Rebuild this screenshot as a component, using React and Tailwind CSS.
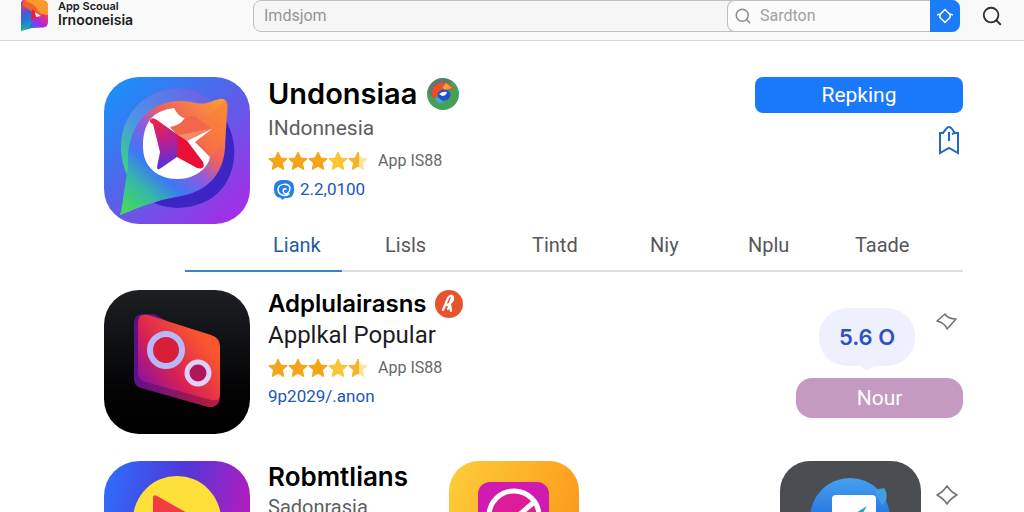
import React, { useState } from 'react';
import { Search } from 'lucide-react';

const TABS = ['Liank', 'Lisls', 'Tintd', 'Niy', 'Nplu', 'Taade'];

const BrandLogo = () => (
  <svg className="w-7 h-8 shrink-0" viewBox="0 0 28 32" fill="none">
    <defs>
      <linearGradient id="brandBase" x1="3" y1="28" x2="27" y2="4" gradientUnits="userSpaceOnUse">
        <stop offset="0" stopColor="#10b981" />
        <stop offset="0.2" stopColor="#2f6fe8" />
        <stop offset="0.45" stopColor="#b026e3" />
        <stop offset="0.7" stopColor="#e8307a" />
        <stop offset="1" stopColor="#fb923c" />
      </linearGradient>
      <linearGradient id="brandWing" x1="2" y1="4" x2="10" y2="29" gradientUnits="userSpaceOnUse">
        <stop offset="0" stopColor="#e0455a" />
        <stop offset="0.35" stopColor="#4a55e0" />
        <stop offset="0.7" stopColor="#1f7fd0" />
        <stop offset="1" stopColor="#1fc08a" />
      </linearGradient>
    </defs>
    <path d="M4 0h18q6 0 6 6v16q0 5-5 5.500L12 28l-11 3V4q0-4 3-4z" fill="url(#brandBase)" />
    <path d="M5 0h17q6 0 6 6v9l-7-1L9 4z" fill="#fb9a2c" />
    <path d="M4 0l10 5 8 10-7-1L2 5z" fill="#f2622a" />
    <path d="M1 5l13 8-4 13-9 5z" fill="url(#brandWing)" />
    <path d="M12 9l9 7-10 4z" fill="#ef1d2f" />
    <path d="M15 12l6 4-5 1z" fill="#fff" />
  </svg>
);

const CompassIcon = () => (
  <svg className="w-full" viewBox="0 0 146 147" fill="none">
    <defs>
      <linearGradient id="compassBg" x1="10" y1="10" x2="130" y2="140" gradientUnits="userSpaceOnUse">
        <stop offset="0" stopColor="#1b8ff8" />
        <stop offset="0.5" stopColor="#5a5fe8" />
        <stop offset="1" stopColor="#a32fe6" />
      </linearGradient>
      <linearGradient id="compassPin" x1="22" y1="132" x2="118" y2="26" gradientUnits="userSpaceOnUse">
        <stop offset="0" stopColor="#45d660" />
        <stop offset="0.18" stopColor="#35b9a4" />
        <stop offset="0.34" stopColor="#3d78f5" />
        <stop offset="0.52" stopColor="#8f5be0" />
        <stop offset="0.68" stopColor="#f0605a" />
        <stop offset="1" stopColor="#fb9a35" />
      </linearGradient>
      <linearGradient id="compassRing" x1="20" y1="95" x2="100" y2="20" gradientUnits="userSpaceOnUse">
        <stop offset="0" stopColor="#3bd67c" />
        <stop offset="0.4" stopColor="#4b93ea" />
        <stop offset="1" stopColor="#6a63e6" />
      </linearGradient>
      <linearGradient id="compassStar" x1="48" y1="42" x2="60" y2="92" gradientUnits="userSpaceOnUse">
        <stop offset="0" stopColor="#f0233f" />
        <stop offset="0.5" stopColor="#b81f94" />
        <stop offset="1" stopColor="#4b35e0" />
      </linearGradient>
    </defs>
    <rect width="146" height="147" rx="35" fill="url(#compassBg)" />
    <path d="M120 40C140 72 130 114 98 126c-18 7-34 6-48 0l60-28z" fill="#3d24c4" />
    <path d="M24 100C8 66 20 28 54 15c22-8 42-3 56 12L70 40 30 70z" fill="url(#compassRing)" />
    <path d="M17 135l7-46C22 50 44 24 76 24c12 0 18 4 27 2l12-4q8-2 8 7l-2 42c-2 30-22 44-44 48-24 4-41 11-58 18q-5 2-2-2z" fill="url(#compassPin)" />
    <path d="M92 50l30-27q3 2 2 10l-3 30-13 17-14-15 14-13z" fill="#fb7a35" opacity="0.5" />
    <path d="M70 31C48 34 39 46 39 70c0 20 15 32 34 32 14 0 26-6 32-18l1-4-15-15 17-13-28-11q-6-2-10-10z" fill="#fff" />
    <path d="M66 50q9-1 15-9 7-4 12 0l15 11-34 7z" fill="#f2674a" />
    <path d="M47 42q2-2 6 1l21 15 12 23-13-1-16 11q-4 3-4-1l3-15-7-28q-5-2-2-5z" fill="url(#compassStar)" />
    <path d="M74 58l7 3 18 24q3 8-6 6L73 80z" fill="#e80f38" />
    <path d="M74 58l34-6-25 12z" fill="#f58a6a" />
  </svg>
);

const RingsIcon = () => (
  <svg className="w-full" viewBox="0 0 146 144" fill="none">
    <defs>
      <linearGradient id="ringsBg" x1="0" y1="0" x2="0" y2="144" gradientUnits="userSpaceOnUse">
        <stop offset="0" stopColor="#1d1f23" />
        <stop offset="0.7" stopColor="#030304" />
        <stop offset="1" stopColor="#000" />
      </linearGradient>
      <linearGradient id="ringsPlate" x1="32" y1="95" x2="95" y2="45" gradientUnits="userSpaceOnUse">
        <stop offset="0" stopColor="#7d12ae" />
        <stop offset="0.45" stopColor="#d71f55" />
        <stop offset="1" stopColor="#f9562f" />
      </linearGradient>
      <linearGradient id="ringsEdge" x1="30" y1="90" x2="115" y2="110" gradientUnits="userSpaceOnUse">
        <stop offset="0" stopColor="#5d128a" />
        <stop offset="1" stopColor="#b81c3b" />
      </linearGradient>
    </defs>
    <rect width="146" height="144" rx="35" fill="url(#ringsBg)" />
    <path d="M38 24q-8 1-8 10v55q0 7 7 9l67 19q12 1 12-11V60L50 24z" fill="url(#ringsEdge)" />
    <path d="M44 25l63 20q9 3 9 11v47q0 9-9 7L42 92q-8-2-8-10V33q0-10 10-8z" fill="url(#ringsPlate)" />
    <circle cx="62" cy="60" r="16" fill="#d81e38" stroke="#b8b8f8" strokeWidth="6" />
    <circle cx="94" cy="83" r="11" fill="#b0175b" stroke="#e3cff8" strokeWidth="5" />
  </svg>
);

const PlayIcon = () => (
  <svg className="w-full" viewBox="0 0 146 146" fill="none">
    <defs>
      <linearGradient id="playBg" x1="0" y1="30" x2="146" y2="60" gradientUnits="userSpaceOnUse">
        <stop offset="0" stopColor="#2f6cfb" />
        <stop offset="0.5" stopColor="#5038d8" />
        <stop offset="1" stopColor="#b81bbd" />
      </linearGradient>
    </defs>
    <rect width="146" height="146" rx="35" fill="url(#playBg)" />
    <circle cx="73" cy="59" r="44" fill="#fde03a" />
    <path d="M49 37q0-4 4-2l48 27q3 2 0 4L53 92q-4 2-4-2z" fill="#f23c42" />
  </svg>
);

const DialIcon = () => (
  <svg className="w-full" viewBox="0 0 130 130" fill="none">
    <defs>
      <linearGradient id="dialBg" x1="10" y1="10" x2="130" y2="60" gradientUnits="userSpaceOnUse">
        <stop offset="0" stopColor="#fdc937" />
        <stop offset="1" stopColor="#fb9a1b" />
      </linearGradient>
    </defs>
    <rect width="130" height="130" rx="30" fill="url(#dialBg)" />
    <rect x="29" y="21" width="71" height="71" rx="12" fill="#cf1bb0" />
    <circle cx="65" cy="55" r="25" fill="#dd1c9a" stroke="#fff" strokeWidth="5" />
    <path d="M84 42L56 66" stroke="#fff" strokeWidth="5" />
  </svg>
);

const PlaneIcon = () => (
  <svg className="w-full" viewBox="0 0 141 141" fill="none">
    <defs>
      <linearGradient id="planeDisc" x1="70" y1="16" x2="70" y2="60" gradientUnits="userSpaceOnUse">
        <stop offset="0" stopColor="#45a2f0" />
        <stop offset="1" stopColor="#2470dd" />
      </linearGradient>
    </defs>
    <rect width="141" height="141" rx="30" fill="#4a4d51" />
    <circle cx="70" cy="57" r="40" fill="url(#planeDisc)" />
    <path d="M94 29l10-2q4 4 2 13l-4 4z" fill="#3f9fe0" />
    <rect x="52" y="34" width="44" height="44" rx="4" fill="#fff" />
    <path d="M87 45L68 57l10 3z" fill="#27a5b8" />
  </svg>
);

const SwirlBadge = () => (
  <svg className="w-8 h-8 shrink-0" viewBox="0 0 32 32" fill="none">
    <circle cx="16" cy="16" r="16" fill="#46a058" />
    <path d="M1 14A15.500 15.500 0 0 1 16 0l9 3-4 6L6 20z" fill="#5d7a6c" />
    <path d="M7 21c-5-8 0-15 7-16 8-1 12 3 12 7l-9-1c-5 1-5 6-10 10z" fill="#ee4d28" />
    <path d="M14 5l2 4 3-4 6 5-8 2z" fill="#f9a03a" />
    <path d="M11 15q3-5 9-3 5 3 3 7-3 5-9 3-4-2-3-7z" fill="#2350cc" />
    <path d="M12 16q4-3 8-2-1 4-5 4z" fill="#f1f5ff" />
    <path d="M8 20q1 6 9 5l-5-5z" fill="#3fa9e8" />
  </svg>
);

const RibbonBadge = () => (
  <svg className="w-7 h-7 shrink-0" viewBox="0 0 28 28" fill="none">
    <circle cx="14" cy="14" r="14" fill="#e8532f" />
    <path d="M8 20l5-12q3-4 5-1 1 5-6 8m3-1l1 7m1-14l-4 12" stroke="#fff" strokeWidth="2.200" strokeLinecap="round" strokeLinejoin="round" />
  </svg>
);

const ChatSwirl = () => (
  <svg className="w-5 h-5 shrink-0" viewBox="0 0 20 20" fill="none">
    <path d="M7 0h6q7 1 7 8v2q0 7-6 8h-3l-3 2-1-2q-7-1-7-8V8q0-7 7-8z" fill="#2480e8" />
    <path d="M15 14c-5 3-11 1-11-5 1-6 11-6 12-1 0 5-4 7-6 5-2-3 0-5 2-4" stroke="#fff" strokeWidth="1.500" strokeLinecap="round" />
  </svg>
);

const BookmarkShare = () => (
  <svg className="w-6 h-8" viewBox="0 0 24 32" fill="none" stroke="#2169c4" strokeWidth="2">
    <path d="M7 8H3v20l9-5 9 5V8h-3" />
    <path d="M6 8c1-2 2-2 3-4q3-4 6 0l3 4-3 1M12 7v9" />
  </svg>
);

const Rating = ({ id, full, label }) => (
  <div className="flex items-center gap-2.5">
    <div className="flex" role="img" aria-label="4.5 stars">
      {[0, 1, 2, 3, 4].map((i) => (
        <svg key={i} className="h-5 w-5" viewBox="0 0 20 20">
          {i === 4 && (
            <defs>
              <linearGradient id={id}>
                <stop offset="0.55" stopColor="#f5b32a" />
                <stop offset="0.55" stopColor="#fbe39a" />
              </linearGradient>
            </defs>
          )}
          <path
            d="M10 1l2.800 6 6.400.7-4.800 4.400 1.400 6.500-5.800-3.300-5.800 3.300 1.400-6.500L.8 7.700 7.200 7z"
            fill={i === 4 ? `url(#${id})` : i < full ? '#f5a418' : '#fbc433'}
            stroke={i === 4 ? `url(#${id})` : i < full ? '#f5a418' : '#fbc433'}
            strokeLinejoin="round"
          />
        </svg>
      ))}
    </div>
    <span className="text-base text-[#66686c]">{label}</span>
  </div>
);

const Header = () => (
  <header className="flex h-[41px] items-start border-b border-[#d9d9d9] bg-[#f9f9f9] px-5">
    <a href="#home" className="flex w-[233px] shrink-0 items-start gap-2.5">
      <BrandLogo />
      <span className="flex flex-col font-semibold text-[#1b1b1b]">
        <span className="text-[11px] leading-[12px]">App Scoual</span>
        <span className="text-sm leading-[15px]">Irnooneisia</span>
      </span>
    </a>
    <form className="flex h-8 flex-1 rounded-lg border border-[#bfc0c2] bg-[#f6f6f6] font-[Roboto,sans-serif]" onSubmit={(e) => e.preventDefault()}>
      <input
        type="text"
        aria-label="Region"
        placeholder="Imdsjom"
        className="min-w-0 flex-1 bg-transparent px-2.5 text-base text-gray-700 outline-none placeholder:text-[#929497]"
      />
      <label className="-my-px flex w-[203px] items-center gap-2 rounded-l-lg border border-r-0 border-[#bfc0c2] bg-[#fbfbfb] pl-1.5">
        <Search className="h-[18px] w-[18px] shrink-0 text-[#8b8d90]" />
        <input
          type="search"
          aria-label="Search"
          placeholder="Sardton"
          className="min-w-0 flex-1 bg-transparent text-base text-gray-700 outline-none placeholder:text-[#a0a2a5]"
        />
      </label>
      <button type="submit" aria-label="Go" className="-my-px -mr-px flex w-[30px] items-center justify-center rounded-r-lg bg-[#1c7cf8]">
        <svg className="w-4 h-4" viewBox="0 0 16 16" fill="none" stroke="#fff" strokeWidth="1.500">
          <path d="M2.500 7L8 1.500 13.500 7M2.500 9L8 14.500 13.500 9M0 7l3-1v4m13-3l-3-1v4" />
        </svg>
      </button>
    </form>
    <button type="button" aria-label="Find" className="ml-5 mt-1 flex h-6 w-6 items-center justify-center">
      <Search className="h-[22px] w-[22px] text-[#303236]" />
    </button>
  </header>
);

export default function App() {
  const [active, setActive] = useState('Liank');

  return (
    <div className="h-screen overflow-hidden bg-white font-['Inter',sans-serif] text-black">
      <Header />

      <main className="pl-26 pr-[61px] pt-9 font-[Roboto,sans-serif]">
        {/* Featured app */}
        <section className="flex h-[147px] gap-[18px]">
          <div className="w-[146px] shrink-0">
            <CompassIcon />
          </div>
          <div className="flex flex-1 flex-col">
            <div className="flex h-[34px] items-center gap-2.5">
              <h1 className="font-['Inter',sans-serif] text-[29px] font-semibold leading-8">Undonsiaa</h1>
              <SwirlBadge />
            </div>
            <p className="text-[21px] leading-[34px] text-[#5c5e62]">INdonnesia</p>
            <div className="flex h-8 items-center">
              <Rating id="halfA" full={3} label="App IS88" />
            </div>
            <a href="#reviews" className="flex h-[26px] items-center gap-1.5 pl-1.5 text-[17px] text-[#1d56b8]">
              <ChatSwirl />
              2.2,0100
            </a>
          </div>
          <div className="flex w-[208px] flex-col items-end">
            <button type="button" className="h-9 w-full rounded-lg bg-[#1a79fb] text-[21px] leading-8 text-white">Repking</button>
            <button type="button" aria-label="Save" className="mt-3 flex w-7 justify-center">
              <BookmarkShare />
            </button>
          </div>
        </section>

        {/* Tabs */}
        <nav className="ml-[81px] grid h-12 grid-cols-[157fr_190fr_118fr_98fr_107fr_108fr] border-b-2 border-[#dcdee0]">
          {TABS.map((tab, i) => (
            <button
              key={tab}
              type="button"
              onClick={() => setActive(tab)}
              className={`-mb-0.5 border-b-2 pb-1 text-left text-xl ${i === 0 ? 'pl-[88px]' : ''} ${i === 1 ? 'pl-[43px]' : ''} ${
                active === tab ? 'border-[#3f82c8] text-[#245c9e]' : 'border-transparent text-[#55575a]'
              }`}
            >
              {tab}
            </button>
          ))}
        </nav>

        {/* Popular app */}
        <section className="mt-[18px] flex h-36 gap-[18px]">
          <div className="w-[146px] shrink-0">
            <RingsIcon />
          </div>
          <div className="flex flex-1 flex-col">
            <div className="flex h-7 items-center gap-2">
              <h2 className="font-['Inter',sans-serif] text-2xl font-semibold leading-7">Adplulairasns</h2>
              <RibbonBadge />
            </div>
            <p className="text-2xl leading-[34px] text-[#1d1d1f]">Applkal Popular</p>
            <div className="flex h-8 items-center">
              <Rating id="halfB" full={3} label="App IS88" />
            </div>
            <a href="#link" className="text-[17px] leading-6 text-[#1d56b8]">9p2029/.anon</a>
          </div>
          <div className="flex w-[167px] flex-col pt-[18px]">
            <div className="flex items-start justify-end gap-5">
              <div className="flex flex-col items-center">
                <span className="flex h-[58px] w-24 items-center justify-center rounded-[28px] bg-[#eff0fe] font-['Inter',sans-serif] text-[22px] font-semibold text-[#2c52c0]">5.6 O</span>
                <svg className="h-3 w-4" viewBox="0 0 16 12">
                  <path d="M1 0h14L8 5z" fill="#eff0fe" />
                </svg>
              </div>
              <button type="button" aria-label="Pin" className="mr-1">
                <svg className="mt-1 w-6 h-5" viewBox="0 0 24 20" fill="none" stroke="#727477" strokeWidth="1.600" strokeLinejoin="round">
                  <path d="M2 9l8-7q3 5 11 5l-9 10q-2-6-10-8z" />
                </svg>
              </button>
            </div>
            <button type="button" className="h-10 rounded-2xl bg-[#c49ac2] text-[21px] leading-8 text-white">Nour</button>
          </div>
        </section>

        {/* More apps */}
        <section className="mt-[27px] flex">
          <div className="w-[146px] shrink-0">
            <PlayIcon />
          </div>
          <div className="ml-[18px] w-[181px] shrink-0">
            <h2 className="font-['Inter',sans-serif] text-[26px] font-semibold leading-8">Robmtlians</h2>
            <p className="text-xl leading-7 text-[#5c5e62]">Sadonrasia</p>
          </div>
          <div className="w-[130px] shrink-0">
            <DialIcon />
          </div>
          <div className="mr-1 ml-auto flex items-start gap-3.5">
            <div className="w-[141px]">
              <PlaneIcon />
            </div>
            <button type="button" aria-label="Pin" className="mt-6">
              <svg className="w-6 h-5" viewBox="0 0 24 20" fill="none" stroke="#727477" strokeWidth="1.600" strokeLinejoin="round">
                <path d="M2 10q6-3 10-9 4 6 10 9-6 3-10 9-4-6-10-9z" />
              </svg>
            </button>
          </div>
        </section>
      </main>
    </div>
  );
}
